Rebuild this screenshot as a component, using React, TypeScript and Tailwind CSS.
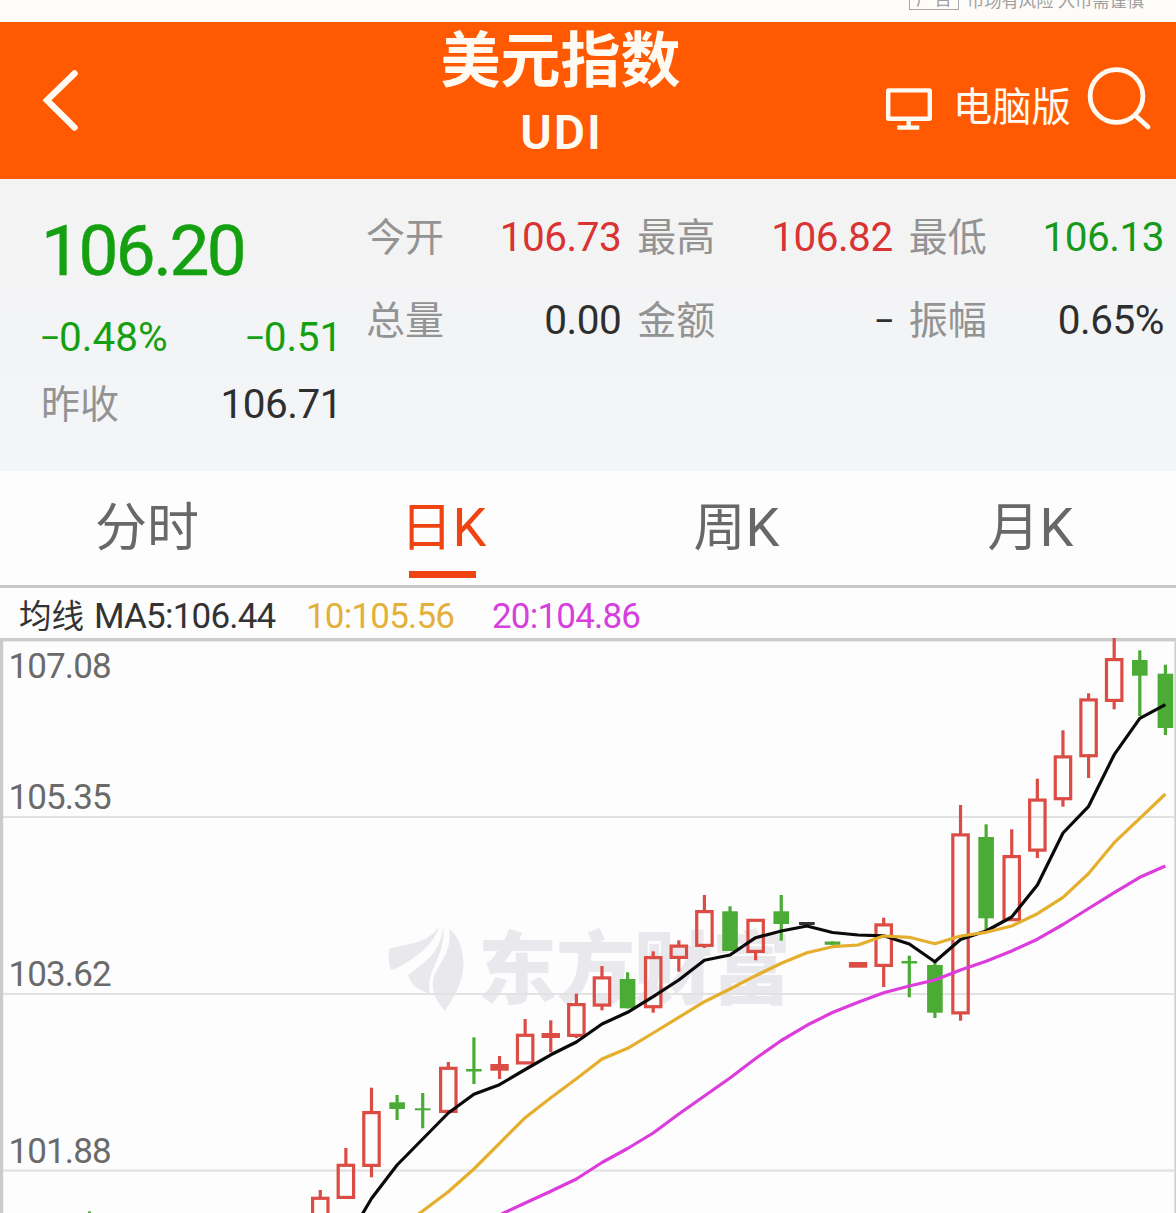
import React from 'react';

type Candle = { k: 'r' | 'g' | 'b'; hi: number; top: number; bot: number; lo: number };

const LAST_X = 1165.4;
const STEP = 25.61;
const xAt = (i: number) => LAST_X - i * STEP;

// Newest first; values are y positions on the chart canvas.
const candles: Candle[] = [
  { k: 'g', hi: 664.7, top: 673.7, bot: 728, lo: 735 },
  { k: 'g', hi: 650.3, top: 660, bot: 675.7, lo: 716 },
  { k: 'r', hi: 638, top: 658, bot: 702, lo: 709.3 },
  { k: 'r', hi: 693.3, top: 698.3, bot: 757.3, lo: 778 },
  { k: 'r', hi: 730.3, top: 755.3, bot: 800.3, lo: 806.7 },
  { k: 'r', hi: 778.7, top: 798.5, bot: 851.7, lo: 858 },
  { k: 'r', hi: 829.3, top: 855, bot: 921.3, lo: 921.3 },
  { k: 'g', hi: 824.3, top: 837, bot: 918.3, lo: 931.7 },
  { k: 'r', hi: 805, top: 833.3, bot: 1014.5, lo: 1020.7 },
  { k: 'g', hi: 961.7, top: 965, bot: 1012.7, lo: 1018 },
  { k: 'g', hi: 955.7, top: 961, bot: 963.5, lo: 997.3 },
  { k: 'r', hi: 917.7, top: 923.3, bot: 967, lo: 987 },
  { k: 'r', hi: 962, top: 962, bot: 967.7, lo: 967.7 },
  { k: 'g', hi: 941.5, top: 941.5, bot: 944.8, lo: 944.8 },
  { k: 'b', hi: 922, top: 922, bot: 925, lo: 925 },
  { k: 'g', hi: 895, top: 911.3, bot: 924, lo: 940.7 },
  { k: 'r', hi: 918.7, top: 918.7, bot: 953, lo: 960.3 },
  { k: 'g', hi: 906.3, top: 911.3, bot: 951, lo: 951 },
  { k: 'r', hi: 895, top: 910, bot: 947, lo: 948 },
  { k: 'r', hi: 940.3, top: 944.5, bot: 959, lo: 971.7 },
  { k: 'r', hi: 951.3, top: 956, bot: 1008.3, lo: 1012.7 },
  { k: 'g', hi: 972.3, top: 979, bot: 1008.3, lo: 1008.3 },
  { k: 'r', hi: 966, top: 976.3, bot: 1006.7, lo: 1010.3 },
  { k: 'r', hi: 993.7, top: 1003, bot: 1037, lo: 1038 },
  { k: 'r', hi: 1020.3, top: 1033, bot: 1038, lo: 1052.3 },
  { k: 'r', hi: 1019, top: 1033.7, bot: 1064.5, lo: 1064.5 },
  { k: 'r', hi: 1056, top: 1064, bot: 1070.7, lo: 1079 },
  { k: 'g', hi: 1037.3, top: 1069, bot: 1071.5, lo: 1084 },
  { k: 'r', hi: 1062, top: 1066.7, bot: 1113, lo: 1113 },
  { k: 'g', hi: 1093, top: 1108.3, bot: 1110.3, lo: 1128.3 },
  { k: 'g', hi: 1095, top: 1102.3, bot: 1109, lo: 1120 },
  { k: 'r', hi: 1087.7, top: 1111, bot: 1167, lo: 1177.3 },
  { k: 'r', hi: 1148, top: 1163.7, bot: 1199, lo: 1199 },
  { k: 'r', hi: 1190, top: 1196.7, bot: 1230, lo: 1240 },
];

const ma5 = [704.7, 718.3, 754.7, 806.3, 833, 885, 917, 931, 939.5, 961.7, 944, 935.8, 935, 932.5, 926, 931, 937.7, 955, 960.3, 980, 996.7, 1012.3, 1024, 1042, 1054.8, 1069.5, 1084.7, 1094.3, 1113, 1139, 1165, 1198.5, 1242];
const ma10 = [794, 818.3, 842.7, 873.5, 897.3, 913.7, 926, 932.3, 936, 943.7, 937.3, 936, 945, 946.7, 952.7, 963.3, 975.7, 989, 1001.7, 1017.3, 1033, 1048.3, 1059, 1078.7, 1097.7, 1117.7, 1143.3, 1169, 1191.7, 1211, 1229];
const ma20 = [866, 877.3, 892.7, 908.5, 924.5, 939.2, 951, 961.3, 970, 980, 986, 992.7, 1002.3, 1012.5, 1025.3, 1040.5, 1058.5, 1078, 1096, 1114, 1133, 1148.5, 1162.5, 1179, 1191.3, 1203, 1215, 1229];

const points = (ys: number[]) => ys.map((y, i) => `${xAt(i).toFixed(1)},${y}`).join(' ');
const ink = { r: '#db4c44', g: '#4aab35', b: '#333333' };

function CandleMark({ c, x }: { c: Candle; x: number }) {
  const color = ink[c.k];
  if (c.k === 'r') {
    const h = c.bot - c.top;
    return (
      <g stroke={color} strokeWidth={3.2}>
        {c.hi < c.top && <line x1={x} x2={x} y1={c.hi} y2={c.top + 1} />}
        {c.lo > c.bot && <line x1={x} x2={x} y1={c.bot - 1} y2={c.lo} />}
        {h < 8 ? (
          <rect x={x - 9.2} y={c.top} width={18.4} height={h} fill={color} stroke="none" />
        ) : (
          <rect x={x - 7.7} y={c.top + 1.6} width={15.4} height={h - 3.2} fill="none" />
        )}
      </g>
    );
  }
  return (
    <g fill={color}>
      <rect x={x - 1.6} y={c.hi} width={3.2} height={c.lo - c.hi} />
      <rect x={x - 7.8} y={c.top} width={15.6} height={c.bot - c.top} />
    </g>
  );
}

const axis = [
  { v: '107.08', y: 678 },
  { v: '105.35', y: 809 },
  { v: '103.62', y: 986 },
  { v: '101.88', y: 1163 },
];

function Chart() {
  return (
    <svg className="block h-[575px] w-full" viewBox="0 638 1176 575">
      <rect x="0" y="638" width="1176" height="575" fill="#fdfdfd" />
      <g fill="#e8e8ed">
        <path d="M389 949 C401 944 425 946 439 927 C434 943 421 953 409 961 C402 966 395 969 391 970 C389 964 388 957 389 949Z" />
        <path d="M443 925 C442 951 426 962 408 975 C411 985 418 990 430 994 C425 968 447 957 443 925Z" />
        <path d="M449 929 C465 940 466 970 460 982 C457 993 450 1002 445 1011 C438 1003 431 994 433 980 C437 964 453 953 449 929Z" />
        <text x="478" y="998" fontSize="79" fontWeight="900" textLength="313" style={{ fontFamily: '"Noto Sans CJK SC", sans-serif' }}>
          东方财富
        </text>
      </g>
      <g stroke="#e2e2e2" strokeWidth="2.2">
        <line x1="3" x2="1174" y1="817" y2="817" />
        <line x1="3" x2="1174" y1="994" y2="994" />
        <line x1="3" x2="1174" y1="1170.7" y2="1170.7" />
      </g>
      <rect x="0" y="638" width="1176" height="3.4" fill="#cbcbcb" />
      <rect x="0" y="638" width="3.2" height="575" fill="#cbcbcb" />
      <rect x="1174.4" y="638" width="1.6" height="575" fill="#d0d0d0" />
      {candles.map((c, i) => (
        <CandleMark key={i} c={c} x={xAt(i)} />
      ))}
      <rect x="88" y="1211.4" width="3" height="2" fill={ink.g} />
      <g fill="none" strokeWidth="3.2" strokeLinejoin="round">
        <polyline points={points(ma5)} stroke="#0a0a0a" />
        <polyline points={points(ma10)} stroke="#e5ae2c" />
        <polyline points={points(ma20)} stroke="#dc3cdc" />
      </g>
      <g fill="#6a6a6a" fontSize="35">
        {axis.map((a) => (
          <text key={a.v} x="8.5" y={a.y} letterSpacing="-0.9">
            {a.v}
          </text>
        ))}
      </g>
    </svg>
  );
}

const quotes = [
  { label: '今开', value: '106.73', tone: 'text-[#d93434]' },
  { label: '最高', value: '106.82', tone: 'text-[#d93434]' },
  { label: '最低', value: '106.13', tone: 'text-[#15991a]' },
  { label: '总量', value: '0.00', tone: 'text-[#2e2e2e]' },
  { label: '金额', value: '–', tone: 'text-[#2e2e2e]' },
  { label: '振幅', value: '0.65%', tone: 'text-[#2e2e2e]' },
];

const tabs = [
  { name: '分时' },
  { name: '日', suffix: 'K', active: true },
  { name: '周', suffix: 'K' },
  { name: '月', suffix: 'K' },
];

function Dash() {
  return <span className="align-[4px] font-['Noto_Sans',sans-serif] text-[36px] leading-none">–</span>;
}

export default function App() {
  return (
    <div className="h-[1213px] w-[1176px] overflow-hidden bg-[#fdfdfd] font-['Roboto','Noto_Sans_CJK_SC',sans-serif] whitespace-nowrap">
      <div className="flex h-[22px] items-end justify-end overflow-hidden bg-[#fefcf9] pr-[32px] pb-[12px] text-[#a0a0a0]">
        <div className="mr-[8px] h-[26px] w-[50px] border border-[#a8a8a8] text-center text-[18px] leading-[28px]">广告</div>
        <div className="h-[26px] w-[177px] text-[17.3px] leading-[34px]">市场有风险 入市需谨慎</div>
      </div>

      <header className="flex h-[157px] bg-[#ff5a02] text-[#fffaf2]">
        <div className="w-[400px] pt-[46px] pl-[40px]">
          <svg className="h-[66px] w-[40px]" viewBox="0 0 40 66" fill="none" stroke="currentColor" strokeWidth="6.4" strokeLinecap="round">
            <path d="M34.5 5.5 L7 32.3 L34.5 59.5" />
          </svg>
        </div>
        <div className="flex w-[321px] flex-col items-center">
          <h1 className="h-[74px] text-[60px] leading-[80px] font-bold">美元指数</h1>
          <div className="h-[74px] pl-[2px] text-[48px] leading-[74px] font-semibold tracking-[2px]">UDI</div>
        </div>
        <div className="flex pl-[163px]">
          <svg className="mt-[64px] h-[46px] w-[50px]" viewBox="0 0 50 46" fill="none" stroke="currentColor" strokeWidth="4.4">
            <rect x="4.2" y="4.4" width="41.6" height="28.4" rx="0.5" />
            <path d="M24.7 33 V40.5 M13.3 41.6 H35.3" />
          </svg>
          <div className="ml-[19px] w-[120px] pt-[59px] text-[39.3px] leading-[54px]">电脑版</div>
          <svg className="mt-[44px] ml-[14px] h-[68px] w-[68px]" viewBox="0 0 68 68" fill="none" stroke="currentColor" strokeWidth="4.8" strokeLinecap="round">
            <circle cx="29.5" cy="30" r="26.4" />
            <path d="M48.5 49.5 L61 61" />
          </svg>
        </div>
      </header>

      <section className="flex h-[292px] bg-linear-to-b from-[#f3f3f3] to-[#f3f5f8]">
        <div className="w-[366px] pt-[23px] pr-[24px] pl-[41px]">
          <div className="h-[100px] text-[71px] leading-[98px] tracking-[-2.5px] text-[#15a012] [-webkit-text-stroke:0.5px_#15a012]">106.20</div>
          <div className="flex h-[70px] justify-between text-[40.5px] leading-[70px] text-[#15a012]">
            <span><Dash />0.48%</span>
            <span className="tracking-[-0.2px]"><Dash />0.51</span>
          </div>
          <div className="flex h-[64px] justify-between text-[39px] leading-[66px]">
            <span className="text-[#939393]">昨收</span>
            <span className="text-[40.5px] leading-[64px] tracking-[-0.5px] text-[#2e2e2e]">106.71</span>
          </div>
        </div>
        <div className="grid h-[166px] w-[798px] grid-cols-3 gap-x-4 pt-[17px]">
          {quotes.map((q) => (
            <div key={q.label} className="flex h-[83px] justify-between text-[39px] leading-[84px]">
              <span className="text-[#939393]">{q.label}</span>
              <span className={`${q.tone} text-[40.5px] leading-[82px] tracking-[-0.5px]`}>{q.value === '–' ? <Dash /> : q.value}</span>
            </div>
          ))}
        </div>
      </section>

      <nav className="grid h-[117px] grid-cols-4 border-b-[3px] border-[#c9c9c9] text-[#686868]">
        {tabs.map((t) => (
          <div key={t.name} className={t.active ? 'flex flex-col items-center pl-[2px] text-[#f04312]' : 'flex flex-col items-center'}>
            <span className={t.suffix ? 'h-[100px] pl-[3px] text-[52px] leading-[115px]' : 'h-[100px] text-[52px] leading-[115px]'}>
              {t.name}
              {t.suffix && <span className="text-[54px] leading-none">{t.suffix}</span>}
            </span>
            {t.active && <i className="block h-[7px] w-[67px] bg-[#f04312]" />}
          </div>
        ))}
      </nav>

      <div className="flex h-[50px] pl-[19px] text-[35px] leading-[57px] tracking-[-0.8px]">
        <span className="w-[75px] text-[32.5px] leading-[59px] tracking-normal text-[#333]">均线</span>
        <span className="w-[212px] text-[#333]">MA5:106.44</span>
        <span className="w-[186px] text-[#e3b03a]">10:105.56</span>
        <span className="text-[#d640dc]">20:104.86</span>
      </div>

      <Chart />
    </div>
  );
}
